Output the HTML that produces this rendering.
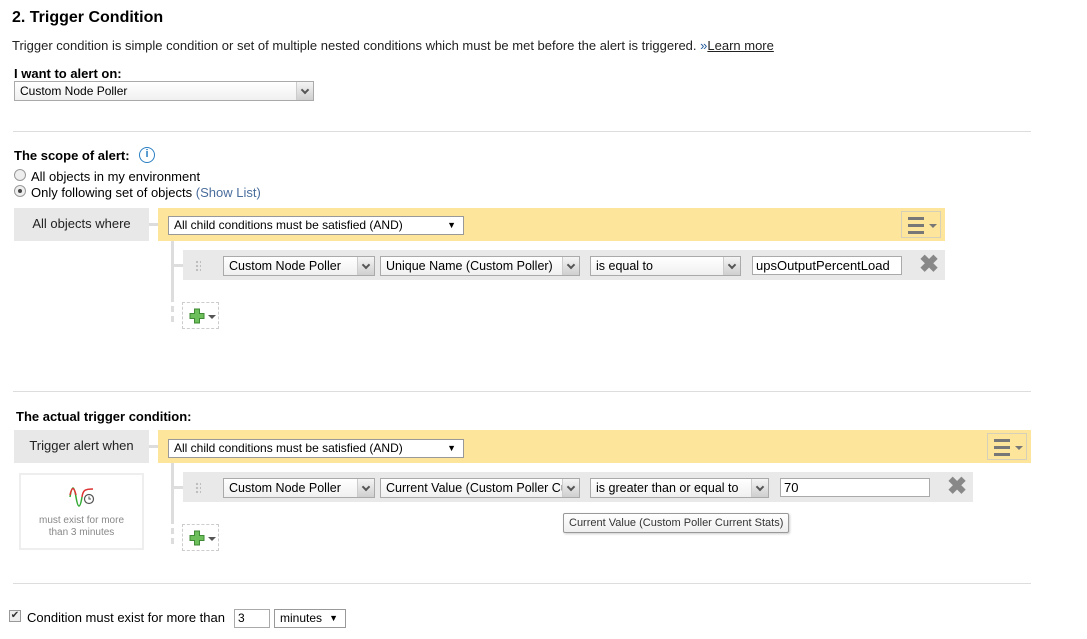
<!DOCTYPE html>
<html><head><meta charset="utf-8"><style>
*{box-sizing:border-box;margin:0;padding:0}
body{width:1087px;height:639px;background:#fff;font-family:"Liberation Sans",Arial,sans-serif;color:#000;position:relative;overflow:hidden;font-size:13px}
.a{position:absolute;white-space:nowrap}
.hr{position:absolute;height:1px;background:#ddd;left:13px;width:1018px}
.sel{position:absolute;height:20px;border:1px solid #aaa;background:linear-gradient(#fff,#f0f0f0);font-size:12.5px;line-height:18px;padding-left:5px;overflow:hidden;white-space:nowrap}
.sel .ar{position:absolute;right:0;top:0;bottom:0;width:17px;background:linear-gradient(#f4f4f4,#cfcfcf);border-left:1px solid #ccc}
.sel .ar:after{content:"";position:absolute;left:5px;top:5px;width:4px;height:4px;border-right:2px solid #555;border-bottom:2px solid #555;transform:rotate(45deg)}
.ds{position:absolute;height:19px;border:1px solid #999;background:#fff;font-size:12px;line-height:17px;padding-left:5px}
.ds:after{content:"▼";position:absolute;right:7px;top:0;font-size:9px}
.grey{position:absolute;background:#e8e8e8;font-size:13px;text-align:center;line-height:31px;color:#222}
.yel{position:absolute;background:#fde69b;height:33px}
.row{position:absolute;background:#e9e9e9;height:30px}
.inp{position:absolute;height:19px;border:1px solid #aaa;background:#fff;font-size:13px;line-height:17px;padding-left:3px}
.x{position:absolute;font-size:24px;font-weight:bold;color:#888;line-height:20px}
.menu{position:absolute;width:40px;height:27px;border:1px solid #d6d0b8}
.menu i{position:absolute;left:6px;width:16px;height:3px;background:#777}
.menu:after{content:"";position:absolute;left:27px;top:12px;border:4px solid transparent;border-top-color:#777}
.dots{position:absolute;width:6px;height:11px;background-image:radial-gradient(#bbb 1px,transparent 1.3px);background-size:4px 4px}
.plus{position:absolute;width:37px;height:27px;border:1px dashed #ccc}
.plus .p{position:absolute;left:6px;top:5px;width:16px;height:16px}
.plus:after{content:"";position:absolute;left:25px;top:12px;border:4px solid transparent;border-top-color:#555}
.vl{position:absolute;width:3px;background:#ddd}
</style></head><body>
<div class="a" style="left:12px;top:9px;font-size:16px;font-weight:bold">2. Trigger Condition</div>
<div class="a" style="left:12px;top:38px;font-size:13px;color:#222">Trigger condition is simple condition or set of multiple nested conditions which must be met before the alert is triggered. <span style="color:#215a9b">»</span><u>Learn more</u></div>
<div class="a" style="left:14px;top:66px;font-size:13px;font-weight:bold">I want to alert on:</div>
<div class="sel" style="left:14px;top:81px;width:300px;font-size:12px">Custom Node Poller<div class="ar"></div></div>
<div class="hr" style="top:131px"></div>

<div class="a" style="left:14px;top:148px;font-weight:bold">The scope of alert:</div>
<div class="a" style="left:139px;top:147px;width:16px;height:16px;border:1.5px solid #2a7fc4;border-radius:50%;color:#2a7fc4;font-size:11px;font-weight:bold;text-align:center;line-height:13px">i</div>
<div class="a" style="left:14px;top:169px;width:12px;height:12px;border:1px solid #999;border-radius:50%;background:#eee"></div>
<div class="a" style="left:31px;top:169px">All objects in my environment</div>
<div class="a" style="left:14px;top:185px;width:12px;height:12px;border:1px solid #999;border-radius:50%;background:#eee"><div style="position:absolute;left:3px;top:3px;width:4px;height:4px;border-radius:50%;background:#444"></div></div>
<div class="a" style="left:31px;top:185px">Only following set of objects <span style="color:#4a6d9c">(Show List)</span></div>

<div class="grey" style="left:14px;top:208px;width:135px;height:33px">All objects where</div>
<div class="a" style="left:149px;top:223px;width:9px;height:3px;background:#ddd"></div>
<div class="yel" style="left:158px;top:208px;width:787px"></div>
<div class="ds" style="left:168px;top:216px;width:296px">All child conditions must be satisfied (AND)</div>
<div class="menu" style="left:901px;top:211px"><i style="top:5px"></i><i style="top:12px"></i><i style="top:19px"></i></div>
<div class="vl" style="left:171px;top:241px;height:55px"></div>
<div class="a" style="left:171px;top:296px;height:26px;border-left:3px dashed #ddd"></div>
<div class="a" style="left:174px;top:264px;width:9px;height:3px;background:#ddd"></div>
<div class="row" style="left:183px;top:250px;width:762px"></div>
<div class="dots" style="left:195px;top:260px"></div>
<div class="sel" style="left:223px;top:256px;width:152px">Custom Node Poller<div class="ar"></div></div>
<div class="sel" style="left:380px;top:256px;width:200px">Unique Name (Custom Poller)<div class="ar"></div></div>
<div class="sel" style="left:590px;top:256px;width:151px">is equal to<div class="ar"></div></div>
<div class="inp" style="left:752px;top:256px;width:150px">upsOutputPercentLoad</div>
<div class="x" style="left:919px;top:255px">✖</div>
<div class="plus" style="left:182px;top:302px"><svg class="p" viewBox="0 0 16 16"><path d="M5.5 1h5v4.5H15v5h-4.5V15h-5v-4.5H1v-5h4.5z" fill="#6cbf5a" stroke="#3f8a34"/></svg></div>

<div class="hr" style="top:391px"></div>
<div class="a" style="left:16px;top:409px;font-weight:bold">The actual trigger condition:</div>
<div class="grey" style="left:14px;top:430px;width:135px;height:33px">Trigger alert when</div>
<div class="a" style="left:149px;top:445px;width:9px;height:3px;background:#ddd"></div>
<div class="yel" style="left:158px;top:430px;width:873px"></div>
<div class="ds" style="left:168px;top:439px;width:296px">All child conditions must be satisfied (AND)</div>
<div class="menu" style="left:987px;top:433px"><i style="top:5px"></i><i style="top:12px"></i><i style="top:19px"></i></div>
<div class="a" style="left:19px;top:473px;width:125px;height:77px;border:2px solid #eee"></div>
<svg class="a" style="left:69px;top:487px" width="26" height="20" viewBox="0 0 26 20"><path d="M1 10 C3 -2 5 -2 7 10 S11 22 13 10" fill="none" stroke="#3a3" stroke-width="1.5"/><path d="M1 8 C3 -1 5 0 7 8" fill="none" stroke="#d33" stroke-width="1.5"/><path d="M13 10 C14 3 16 2 24 2" fill="none" stroke="#d33" stroke-width="1.5"/><circle cx="20" cy="12" r="4.5" fill="#fff" stroke="#555" stroke-width="1.2"/><path d="M20 9.5V12h2" fill="none" stroke="#555"/></svg>
<div class="a" style="left:19px;top:515px;width:125px;text-align:center;font-size:10px;color:#888;line-height:12px">must exist for more<br>than 3 minutes</div>
<div class="vl" style="left:171px;top:463px;height:55px"></div>
<div class="a" style="left:171px;top:518px;height:26px;border-left:3px dashed #ddd"></div>
<div class="a" style="left:174px;top:486px;width:9px;height:3px;background:#ddd"></div>
<div class="row" style="left:183px;top:472px;width:790px"></div>
<div class="dots" style="left:195px;top:482px"></div>
<div class="sel" style="left:223px;top:478px;width:152px">Custom Node Poller<div class="ar"></div></div>
<div class="sel" style="left:380px;top:478px;width:200px">Current Value (Custom Poller Cu<div class="ar"></div></div>
<div class="sel" style="left:590px;top:478px;width:179px">is greater than or equal to<div class="ar"></div></div>
<div class="inp" style="left:780px;top:478px;width:150px">70</div>
<div class="x" style="left:947px;top:477px">✖</div>
<div class="plus" style="left:182px;top:524px"><svg class="p" viewBox="0 0 16 16"><path d="M5.5 1h5v4.5H15v5h-4.5V15h-5v-4.5H1v-5h4.5z" fill="#6cbf5a" stroke="#3f8a34"/></svg></div>
<div class="a" style="left:563px;top:513px;width:226px;height:20px;border:1px solid #999;border-radius:2px;background:linear-gradient(#fff,#eee);font-size:11px;line-height:18px;padding-left:5px;color:#333;box-shadow:1px 1px 2px #ccc">Current Value (Custom Poller Current Stats)</div>

<div class="hr" style="top:583px"></div>
<div class="a" style="left:9px;top:610px;width:12px;height:12px;border:1px solid #999;background:#eee;font-size:10px;line-height:10px;text-align:center;color:#333">✔</div>
<div class="a" style="left:27px;top:610px">Condition must exist for more than</div>
<div class="inp" style="left:234px;top:609px;width:36px;font-size:12px">3</div>
<div class="ds" style="left:274px;top:609px;width:72px;font-size:12px">minutes</div>
</body></html>
